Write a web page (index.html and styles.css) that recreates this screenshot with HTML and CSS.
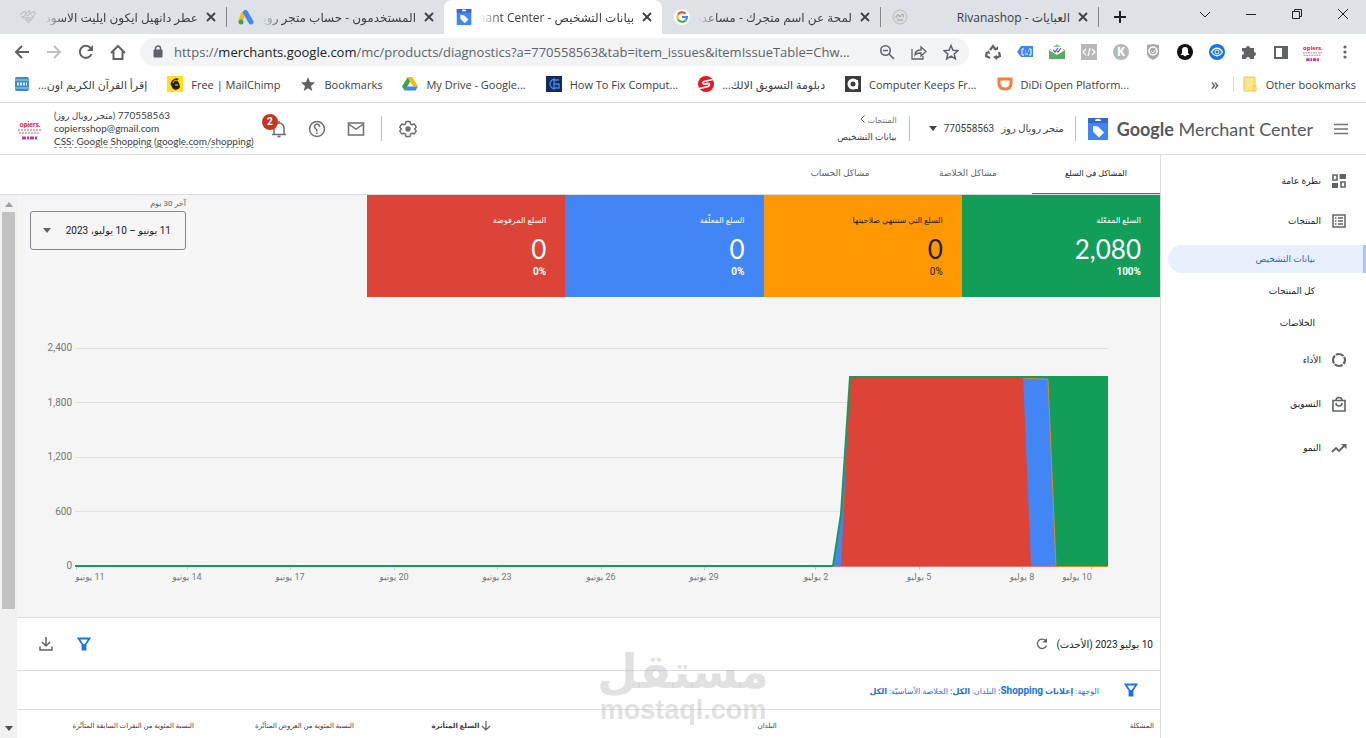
FILE: index.html
```html
<!DOCTYPE html>
<html lang="en">

<head>
    <meta charset="UTF-8">
    <meta name="viewport" content="width=device-width, initial-scale=1.0">
    <title>بيانات التشخيص - Merchant Center</title>
    <link rel="stylesheet" href="styles.css">
</head>

<body>
    <!-- shared icons -->
    <svg class="symbols" aria-hidden="true">
        <symbol id="close" viewBox="0 0 16 16"><path d="M4 4l8 8M12 4l-8 8" fill="none" stroke="#3c4043" stroke-width="1.8"/></symbol>
        <symbol id="tag" viewBox="0 0 20 22">
            <path d="M0 0h20v22H0z" fill="#4285f4"/><path d="M0 0h20v5H0z" fill="#3367d6"/>
            <path d="M7 3c0-3 6-3 6 0z" fill="#fff"/>
            <path d="M5 8l5 .5 6 6-5 5-6-6z" fill="#fff"/>
        </symbol>
        <symbol id="avatar" viewBox="0 0 26 26">
            <text x="13" y="11" text-anchor="middle" font-size="7" font-weight="700" fill="#e8112d">opiers.</text>
            <path d="M1 14h24M2 17h21" stroke="#e58a9c" stroke-width="1.5" stroke-dasharray="2 1"/>
            <path d="M5 22h16" stroke="#c736a5" stroke-width="3" stroke-dasharray="4 1 2 1"/>
        </symbol>
        <symbol id="stamp" viewBox="0 0 16 16">
            <path d="M1 6c0-4 6-4 5-1S2 8 1 7m5-2c2-4 5-4 4-1S7 8 7 6m4-1c2-3 5-3 4 0s-4 3-3 1M2 9h12M5 11h7M7 13h3" fill="none" stroke="#b3b3b3" stroke-width="1"/>
        </symbol>
        <symbol id="filter" viewBox="0 0 14 14"><path d="M1.500 1.500h11L8.500 7.500v5h-3v-5z" fill="none" stroke="#1a73e8" stroke-width="1.800"/><path d="M5.500 7h3v5.500h-3z" fill="#1a73e8"/></symbol>
    </svg>

    <header class="browser">
        <div class="tabstrip">
            <div class="tab">
                <svg width="16" height="16"><use href="#stamp"/></svg>
                <span class="title fade">عطر دانهيل ايكون ايليت الاسود</span>
                <button class="close" aria-label="Close"><svg width="16" height="16"><use href="#close"/></svg></button>
            </div>
            <div class="tab line">
                <svg width="16" height="16" viewBox="0 0 16 16"><path d="M6 3L2.500 12" stroke="#fbbc04" stroke-width="4.500"/><path d="M7.500 3.500L13 13" stroke="#4285f4" stroke-width="5" stroke-linecap="round"/><circle cx="3" cy="13" r="2.500" fill="#34a853"/></svg>
                <span class="title fade">المستخدمون - حساب متجر رويال</span>
                <button class="close" aria-label="Close"><svg width="16" height="16"><use href="#close"/></svg></button>
            </div>
            <div class="tab active">
                <svg width="16" height="16"><use href="#tag"/></svg>
                <span class="title fade">بيانات التشخيص - Merchant Center</span>
                <button class="close" aria-label="Close"><svg width="16" height="16"><use href="#close"/></svg></button>
            </div>
            <div class="tab">
                <svg width="16" height="16" viewBox="0 0 16 16"><circle cx="8" cy="8" r="8" fill="#fff"/><g fill="none" stroke-width="2"><path d="M11.500 4.500A5 5 0 0 0 4 5.500" stroke="#ea4335"/><path d="M4 5.500a5 5 0 0 0 0 5" stroke="#fbbc04"/><path d="M4 10.500a5 5 0 0 0 7.500 1" stroke="#34a853"/><path d="M11.500 11.500A5 5 0 0 0 13 8H8" stroke="#4285f4"/></g></svg>
                <span class="title fade">لمحة عن اسم متجرك - مساعدة</span>
                <button class="close" aria-label="Close"><svg width="16" height="16"><use href="#close"/></svg></button>
            </div>
            <div class="tab line">
                <svg width="16" height="16" viewBox="0 0 16 16"><circle cx="8" cy="8" r="7" fill="#ddd" stroke="#bbb"/><path d="M4 9c0-4 4-4 3-1m1 0c1-4 5-3 3 0M5 11h6" fill="none" stroke="#999"/></svg>
                <span class="title">العبايات - Rivanashop</span>
                <button class="close" aria-label="Close"><svg width="16" height="16"><use href="#close"/></svg></button>
            </div>
            <button class="newtab" aria-label="New tab"><svg width="14" height="14" viewBox="0 0 14 14"><path d="M7 1v12M1 7h12" stroke="#202124" stroke-width="2"/></svg></button>
            <div class="window">
                <button aria-label="Search tabs"><svg width="12" height="12" viewBox="0 0 12 12"><path d="M1 4l5 5 5-5"/></svg></button>
                <button aria-label="Minimize"><svg width="12" height="12" viewBox="0 0 12 12"><path d="M1 6.500h10"/></svg></button>
                <button aria-label="Restore"><svg width="12" height="12" viewBox="0 0 12 12"><path d="M1.500 3.500h7v7h-7zM3.500 3.500v-2h7v7h-2"/></svg></button>
                <button aria-label="Close window"><svg width="12" height="12" viewBox="0 0 12 12"><path d="M1 1l10 10M11 1L1 11"/></svg></button>
            </div>
        </div>

        <div class="toolbar">
            <button aria-label="Back"><svg width="16" height="16" viewBox="0 0 16 16"><path d="M15 8H2M8 2L2 8l6 6" fill="none" stroke="#5f6368" stroke-width="2"/></svg></button>
            <button aria-label="Forward"><svg width="16" height="16" viewBox="0 0 16 16"><path d="M1 8h13M8 2l6 6-6 6" fill="none" stroke="#bdc1c6" stroke-width="2"/></svg></button>
            <button aria-label="Reload"><svg width="16" height="16" viewBox="0 0 16 16"><path d="M13.500 10A6 6 0 1 1 12.500 4" fill="none" stroke="#5f6368" stroke-width="2"/><path d="M15 1v6H9z" fill="#5f6368"/></svg></button>
            <button aria-label="Home"><svg width="16" height="16" viewBox="0 0 16 16"><path d="M1 9l7-7 7 7M3.500 7.500V15h9V7.500" fill="none" stroke="#5f6368" stroke-width="2"/></svg></button>
            <div class="omnibox">
                <svg width="10" height="14" viewBox="0 0 10 14"><path d="M1 5h8v7H1z" fill="#5f6368" stroke="#5f6368"/><path d="M2.500 5V3.500a2.500 2.500 0 0 1 5 0V5" fill="none" stroke="#5f6368" stroke-width="1.500"/></svg>
                <span class="url">https://<b>merchants.google.com</b>/mc/products/diagnostics?a=770558563&amp;tab=item_issues&amp;itemIssueTable=Chw...</span>
                <button aria-label="Zoom"><svg width="16" height="16" viewBox="0 0 16 16"><g fill="none" stroke="#5f6368" stroke-width="1.600"><circle cx="6.500" cy="6.500" r="4.700"/><path d="M10 10l5 5M4 6.500h5"/></g></svg></button>
                <button aria-label="Share"><svg width="16" height="16" viewBox="0 0 16 16"><path d="M1 5v10h11v-3M4 11c0-4 3-5 6-5V3l5 4.500L10 12V9c-3 0-5 .5-6 2z" fill="none" stroke="#5f6368" stroke-width="1.300"/></svg></button>
                <button aria-label="Bookmark this page"><svg width="16" height="16" viewBox="0 0 16 16"><path d="M8 1.500l2 4.700 5 .4-3.800 3.300 1.200 5L8 12.200 3.600 15l1.200-5L1 6.600l5-.4z" fill="none" stroke="#5f6368" stroke-width="1.500"/></svg></button>
            </div>
            <div class="extensions">
                <svg viewBox="0 0 16 16"><path d="M5 6l3-4 3 4M2 8l-1 4 4 2M14 8l1 4-4 2" fill="none" stroke="#5f6368" stroke-width="2.200"/><path d="M9 6h4V2zM4 6L1 9l4 1zM12 11l-4 2 4 3z" fill="#5f6368"/></svg>
                <svg viewBox="0 0 16 16"><path d="M4 2h12v11H4l-4-5z" fill="#4285f4"/><path d="M7 5H5v6h2M12 5h2v6h-2M8 7h1M11 7h1M8 10h3" fill="none" stroke="#fff"/></svg>
                <svg viewBox="0 0 16 16"><path d="M0 6l8-6 8 6z" fill="#8bc98f"/><path d="M2 3h12v8H2z" fill="#fff"/><path d="M4 6l2 2 3-4M8 7l1 1 3-4" fill="none" stroke="#7646c8" stroke-width="1.200"/><path d="M0 6l8 5 8-5v9H0z" fill="#58ad61"/></svg>
                <svg viewBox="0 0 16 16"><path d="M0 0h16v16H0z" fill="#b8b8b8"/><path d="M5 5L2 8l3 3M11 5l3 3-3 3M9 4l-2 8" fill="none" stroke="#fff" stroke-width="1.300"/></svg>
                <svg viewBox="0 0 16 16"><circle cx="8" cy="8" r="8" fill="#b8b8b8"/><text x="8" y="12" text-anchor="middle" font-size="12" font-weight="700" fill="#fff">K</text></svg>
                <svg viewBox="0 0 16 16"><path d="M2 1l6-1 6 1v8c0 4-4 6-6 7-2-1-6-3-6-7z" fill="#a9a9a9"/><circle cx="8" cy="7" r="4" fill="none" stroke="#fff" stroke-width="1.500"/><path d="M6 7l2 2 4-5" fill="none" stroke="#fff"/></svg>
                <svg viewBox="0 0 16 16"><circle cx="8" cy="8" r="8" fill="#111"/><path d="M5 6a3 3 0 0 1 6 0v3l1.500 2H10l-2 1.500L6 11H3.500L5 9z" fill="#fff"/></svg>
                <svg viewBox="0 0 16 16"><circle cx="8" cy="8" r="8" fill="#1a73e8"/><path d="M2.500 8c3-5 8-5 11 0-3 5-8 5-11 0z" fill="none" stroke="#fff" stroke-width="1.300"/><circle cx="8" cy="8" r="2" fill="none" stroke="#fff"/></svg>
                <svg viewBox="0 0 16 16"><path d="M1 4h4a2 2 0 1 1 4 0h4v4a2 2 0 1 1 0 4v3H9a2 2 0 1 0-4 0H1v-4a2 2 0 1 0 0-4z" fill="#5f6368"/></svg>
                <svg viewBox="0 0 16 16"><path d="M2 3h12v11H2z" fill="none" stroke="#5f6368" stroke-width="2"/><path d="M9 3h5v11H9z" fill="#5f6368"/></svg>
                <svg class="face"><use href="#avatar"/></svg>
                <svg viewBox="0 0 16 16"><g fill="#5f6368"><circle cx="8" cy="3" r="1.600"/><circle cx="8" cy="8" r="1.600"/><circle cx="8" cy="13" r="1.600"/></g></svg>
            </div>
        </div>

        <nav class="bookmarks">
            <a href="#"><svg viewBox="0 0 16 16"><rect x="1" y="1" width="14" height="14" rx="2" fill="#3c8dc5"/><path d="M1 4h14M1 12h14" stroke="#a9d6ee"/><path d="M3 8h10" stroke="#d5ecf8" stroke-width="3" stroke-dasharray="2 1"/></svg><span class="ar">إقرأ القرآن الكريم اون...</span></a>
            <a href="#"><svg viewBox="0 0 16 16"><path d="M0 0h16v16H0z" fill="#ffe01b"/><path d="M4 9c-2-2 4-9 8-6l-2 1 2 3 1 4c-1 3-7 4-8 0z" fill="#241c15"/><path d="M6 7c1-3 3-3 4-2M8 9h3" fill="none" stroke="#ffe01b"/></svg><span>Free | MailChimp</span></a>
            <a href="#"><svg viewBox="0 0 16 16"><path d="M8 1l2 5 5 .4-4 3.500 1.300 5L8 12.200 3.700 15 5 9.900 1 6.400 6 6z" fill="#5f6368"/></svg><span>Bookmarks</span></a>
            <a href="#"><svg viewBox="0 0 16 16"><path d="M5.500 1.500h5L5 11l-2.500 3.500L0 10.500z" fill="#34a853"/><path d="M5.500 1.500h5l5.500 9h-5z" fill="#fbbc04"/><path d="M5 10.500h11l-2.500 4h-11z" fill="#4285f4"/></svg><span>My Drive - Google...</span></a>
            <a href="#"><svg viewBox="0 0 16 16"><path d="M0 0h16v16H0z" fill="#17285c"/><path d="M9 3a5 5 0 1 0 0 10M8 3v10M8 4h5M8 8h5v4H9" fill="none" stroke="#3d8de0" stroke-width="1.300"/></svg><span>How To Fix Comput...</span></a>
            <a href="#"><svg viewBox="0 0 16 16"><circle cx="8" cy="8" r="8" fill="#e9151b"/><path d="M16 3L6 5.500c-2 1-1 3 1 2.500l3-.5c2 0 2 2 0 3L0 13" fill="none" stroke="#fff" stroke-width="1.800"/></svg><span class="ar">دبلومة التسويق الالك...</span></a>
            <a href="#"><svg viewBox="0 0 16 16"><path d="M0 0h16v16H0z" fill="#3c3c3c"/><circle cx="8" cy="8" r="4" fill="none" stroke="#fff" stroke-width="3"/><path d="M11 4h2v9h-2z" fill="#fff"/></svg><span>Computer Keeps Fr...</span></a>
            <a href="#"><svg viewBox="0 0 16 16"><path d="M2 3h12v4c0 4-2 6-6 6s-6-2-6-6z" fill="none" stroke="#fc7b34" stroke-width="3"/></svg><span>DiDi Open Platform...</span></a>
            <span class="more">»</span>
            <a class="other" href="#"><svg viewBox="0 0 16 16"><path d="M2 1h11v14H2z" fill="#fce58c" stroke="#e8c84c"/><path d="M11 10h3v5h-3z" fill="#fce58c" stroke="#e8c84c"/></svg><span>Other bookmarks</span></a>
        </nav>
    </header>

    <div class="app" dir="rtl">
        <header class="topbar">
            <button class="menu" aria-label="القائمة"><svg width="16" height="12" viewBox="0 0 16 12"><path d="M1 1.500h14M1 6h14M1 10.500h14" stroke="#757575" stroke-width="1.300"/></svg></button>
            <a class="logo" href="#" dir="ltr"><svg width="22" height="22"><use href="#tag"/></svg><span><b>Google</b> Merchant Center</span></a>
            <button class="account"><span>متجر رويال روز</span><span>770558563</span><svg width="8" height="5" viewBox="0 0 8 5"><path d="M0 0h8L4 5z" fill="#444"/></svg></button>
            <div class="crumbs">
                <a href="#">المنتجات <svg width="5" height="8" viewBox="0 0 5 8"><path d="M4.500 .5L1 4l3.500 3.500" fill="none" stroke="#b8433c"/></svg></a>
                <strong>بيانات التشخيص</strong>
            </div>
            <div class="tools" dir="ltr">
                <div class="user">
                    <svg width="26" height="26"><use href="#avatar"/></svg>
                    <div>
                        <p><span class="shop" dir="rtl">(متجر رويال روز)</span> 770558563</p>
                        <p>copiersshop@gmail.com</p>
                        <p><a href="#">CSS: Google Shopping (google.com/shopping)</a></p>
                    </div>
                </div>
                <button class="bell" aria-label="الإشعارات"><svg width="16" height="18" viewBox="0 0 16 18"><path d="M1 14.500h14M3 14V8a5 5 0 0 1 10 0v6M8 1v2M6.500 16.500h3" fill="none" stroke="#6f6f6f" stroke-width="1.500"/></svg><span class="badge">2</span></button>
                <button aria-label="مساعدة"><svg width="18" height="18" viewBox="0 0 18 18"><g fill="none" stroke="#6f6f6f" stroke-width="1.500"><circle cx="9" cy="9" r="7.500"/><path d="M11.500 7a2.500 2.500 0 1 0-4 1.500C9 9.500 9 10 9 11.500M9 12.500V14"/></g></svg></button>
                <button aria-label="البريد"><svg width="18" height="18" viewBox="0 0 18 18"><path d="M1.500 3h15v12h-15zM1.500 4L9 9l7.500-5" fill="none" stroke="#6f6f6f" stroke-width="1.500"/></svg></button>
                <button class="gear" aria-label="الإعدادات"><svg width="18" height="18" viewBox="0 0 18 18"><path d="M7 1.500h4l.6 2.500 1.400.8 2.400-.8 1.800 3.200L15.500 9l1.700 1.800-1.800 3.200-2.400-.8-1.400.8-.6 2.500H7L6.400 14 5 13.200l-2.400.8-1.800-3.200L2.500 9 .8 7.200 2.600 4 5 4.800 6.400 4z" fill="none" stroke="#6f6f6f" stroke-width="1.500" stroke-linejoin="round"/><circle cx="9" cy="9" r="2.700" fill="#6f6f6f"/></svg></button>
            </div>
        </header>

        <div class="body">
            <nav class="side">
                <a class="item" href="#"><svg viewBox="0 0 16 16"><path d="M2 2h4v5H2zM10 9h4v5h-4z" fill="none" stroke="#5f6368" stroke-width="1.600"/><path d="M8.500 1H15v5H8.500zM1 10h6v5H1z" fill="#5f6368"/></svg>نظرة عامة</a>
                <a class="item" href="#"><svg viewBox="0 0 16 16"><path d="M2 2h12v12H2zM4 5h1.500M4 8h1.500M4 11h1.500M7 5h5M7 8h5M7 11h5" fill="none" stroke="#5f6368" stroke-width="1.500"/></svg>المنتجات</a>
                <div class="sub">
                    <a class="current" href="#">بيانات التشخيص</a>
                    <a href="#">كل المنتجات</a>
                    <a href="#">الخلاصات</a>
                </div>
                <a class="item" href="#"><svg viewBox="0 0 16 16"><circle cx="8" cy="8" r="6" fill="none" stroke="#5f6368" stroke-width="2.200" stroke-dasharray="8.400 1" stroke-dashoffset="4"/></svg>الأداء</a>
                <a class="item spaced" href="#"><svg viewBox="0 0 16 16"><path d="M2 4.500h12V15H2zM5 4.500a3 3 0 0 1 6 0M5 7a3 3 0 0 0 6 0" fill="none" stroke="#5f6368" stroke-width="1.600"/></svg>التسويق</a>
                <a class="item spaced" href="#"><svg viewBox="0 0 16 16"><path d="M1 12l4-4 3 3 6-6" fill="none" stroke="#5f6368" stroke-width="1.800"/><path d="M10 4h5.500v5z" fill="#5f6368"/></svg>النمو</a>
            </nav>

            <main>
                <nav class="sections">
                    <a class="on" href="#">المشاكل في السلع</a>
                    <a href="#">مشاكل الخلاصة</a>
                    <a href="#">مشاكل الحساب</a>
                </nav>
                <div class="scroller">
                    <div class="content">
                        <section class="overview">
                            <div class="summary">
                                <div class="cards">
                                    <div class="card green"><h3>السلع المفعّلة</h3><p class="count">2,080</p><p class="pct">100%</p></div>
                                    <div class="card orange"><h3>السلع التي ستنتهي صلاحيتها</h3><p class="count">0</p><p class="pct">0%</p></div>
                                    <div class="card blue"><h3>السلع المعلّقة</h3><p class="count">0</p><p class="pct">0%</p></div>
                                    <div class="card red"><h3>السلع المرفوضة</h3><p class="count">0</p><p class="pct">0%</p></div>
                                </div>
                                <div class="range">
                                    <label for="range">آخر 30 يوم</label>
                                    <div class="picker">
                                        <select id="range"><option>11 يونيو – 10 يوليو، 2023</option></select>
                                        <svg width="8" height="5" viewBox="0 0 8 5"><path d="M0 0h8L4 5z" fill="#5f6368"/></svg>
                                    </div>
                                </div>
                            </div>
                            <svg class="chart" viewBox="0 0 1143 256">
                                <path d="M58 18.500h1033M58 72.500h1033M58 127.500h1033M58 181.500h1033" stroke="#e0e0e0"/>
                                <path d="M59.500 236v4M170.500 236v4M273.500 236v4M377.500 236v4M480.500 236v4M584.500 236v4M687.500 236v4M798.500 236v4M902.500 236v4M1005.500 236v4M1074.500 236v4" stroke="#ccc"/>
                                <path d="M816 236l8-52 9-137h258v189z" fill="#129d58"/>
                                <path d="M816 236l8-50 9-139h173l25 1.500 8 187.500z" fill="#4285f4"/>
                                <path d="M824 236l9-189h173l8 189z" fill="#db4437"/>
                                <path d="M1006 48l25 1.500 8 187h52" fill="none" stroke="#d98b1c"/>
                                <path d="M58 236h758l8-52 9-137h258" fill="none" stroke="#129d58" stroke-width="2"/>
                                <path d="M816 236.500h223" stroke="#e57373"/>
                                <g class="yaxis">
                                    <text x="55" y="21">2,400</text><text x="55" y="76">1,800</text><text x="55" y="130">1,200</text><text x="55" y="185">600</text><text x="55" y="239">0</text>
                                </g>
                                <g class="xaxis">
                                    <text x="73" y="250">11 يونيو</text><text x="170" y="250">14 يونيو</text><text x="273" y="250">17 يونيو</text><text x="377" y="250">20 يونيو</text><text x="480" y="250">23 يونيو</text><text x="584" y="250">26 يونيو</text><text x="687" y="250">29 يونيو</text><text x="799" y="250">2 يوليو</text><text x="902" y="250">5 يوليو</text><text x="1005" y="250">8 يوليو</text><text x="1060" y="250">10 يوليو</text>
                                </g>
                            </svg>
                        </section>

                        <div class="actions">
                            <span class="date">10 يوليو 2023 (الأحدث)</span>
                            <button aria-label="تحديث"><svg width="12" height="12" viewBox="0 0 12 12"><path d="M10.500 7.500A4.700 4.700 0 1 1 9.500 2.500" fill="none" stroke="#5f6368" stroke-width="1.300"/><path d="M11 0v4.500H6.500z" fill="#5f6368"/></svg></button>
                            <button class="push" aria-label="تصفية"><svg width="14" height="14"><use href="#filter"/></svg></button>
                            <button class="download" aria-label="تنزيل"><svg width="14" height="14" viewBox="0 0 14 14"><path d="M7 0v9M3 5l4 4 4-4M1 9.500V13h12V9.500" fill="none" stroke="#5f6368" stroke-width="1.500"/></svg></button>
                        </div>
                        <div class="filters">
                            <svg width="14" height="14"><use href="#filter"/></svg>
                            <a href="#">الوجهة: <b>إعلانات <span class="latin">Shopping</span></b>؛ البلدان: <b>الكل</b>؛ الخلاصة الأساسيّة: <b>الكل</b></a>
                        </div>
                        <table>
                            <thead>
                                <tr>
                                    <th class="issue">المشكلة</th>
                                    <th class="countries">البلدان</th>
                                    <th class="affected"><svg width="10" height="10" viewBox="0 0 10 10"><path d="M5 0v9M1 5l4 4 4-4" fill="none" stroke="#5f6368" stroke-width="1.200"/></svg> السلع المتأثرة</th>
                                    <th class="shown">النسبة المئوية من العروض المتأثّرة</th>
                                    <th>النسبة المئوية من النقرات السابقة المتأثّرة</th>
                                </tr>
                            </thead>
                        </table>
                    </div>
                    <div class="scrollbar">
                        <svg width="8" height="5" viewBox="0 0 8 5"><path d="M0 5l4-5 4 5z" fill="#a0a0a0"/></svg>
                        <div class="thumb"></div>
                        <svg width="8" height="5" viewBox="0 0 8 5"><path d="M0 0l4 5 4-5z" fill="#505050"/></svg>
                    </div>
                </div>
            </main>
        </div>
    </div>

    <div class="watermark" aria-hidden="true"><span class="mark">مستقل</span><span class="site">mostaql.com</span></div>
</body>

</html>
```
FILE: styles.css
```css
* {
    box-sizing: border-box;
}

body {
    margin: 0;
    height: 100vh;
    display: flex;
    flex-direction: column;
    overflow: hidden;
    background-color: #fff;
    color: #3c4043;
    font-family: Roboto, "DejaVu Sans", sans-serif;
    font-size: 9px;
}

p, h3 {
    margin: 0;
}

a {
    color: inherit;
    text-decoration: none;
}

button {
    display: flex;
    align-items: center;
    padding: 0;
    border: none;
    background: none;
    color: inherit;
    font: inherit;
    cursor: pointer;
}

svg {
    flex: none;
}

.symbols {
    position: absolute;
    width: 0;
    height: 0;
}

/* browser frame */
.browser {
    font-family: "Open Sans", "DejaVu Sans", sans-serif;
    font-size: 11px;
    border-bottom: 1px solid #dadce0;
}

.tabstrip {
    display: flex;
    height: 34px;
    padding-left: 8px;
    background-color: #dee1e6;
}

.tab {
    display: flex;
    flex: 0 1 218px;
    min-width: 0;
    align-items: center;
    padding: 0 7px 0 12px;
    border-radius: 8px 8px 0 0;
}

.tab.line {
    border-radius: 0;
    background: linear-gradient(#80868b, #80868b) left / 1px 20px no-repeat;
}

.tab.active {
    background-color: #fff;
}

.title {
    flex: 1;
    margin: 0 5px 0 8px;
    overflow: hidden;
    white-space: nowrap;
    direction: rtl;
    font-size: 12px;
}

.title.fade {
    mask-image: linear-gradient(to right, transparent, #000 20px);
}

.newtab {
    width: 44px;
    justify-content: center;
    background: linear-gradient(#80868b, #80868b) left / 1px 20px no-repeat;
}

.window {
    display: flex;
    margin-left: auto;
    height: 28px;
}

.window button {
    width: 46px;
    justify-content: center;
}

.window path {
    fill: none;
    stroke: #202124;
}

.toolbar {
    display: flex;
    align-items: center;
    height: 36px;
    padding: 0 13px 0 14px;
    gap: 16px;
}

.omnibox {
    display: flex;
    flex: 1;
    align-items: center;
    gap: 16px;
    min-width: 0;
    height: 28px;
    margin-left: -2px;
    padding: 0 10px 0 13px;
    border-radius: 14px;
    background-color: #f1f3f4;
}

.url {
    flex: 1;
    min-width: 0;
    margin-left: -5px;
    overflow: hidden;
    white-space: nowrap;
    font-size: 13px;
    color: #5f6368;
}

.url b {
    font-weight: 400;
    color: #202124;
}

.extensions {
    display: flex;
    align-items: center;
    gap: 16px;
}

.extensions svg, .bookmarks svg {
    width: 16px;
    height: 16px;
}

.extensions .face {
    width: 22px;
    height: 22px;
    margin: 0 -3px;
}

.bookmarks {
    display: flex;
    align-items: center;
    gap: 20px;
    height: 32px;
    padding: 0 10px 4px 14px;
    white-space: nowrap;
}

.bookmarks a {
    display: flex;
    align-items: center;
    gap: 8px;
}

.bookmarks .ar {
    direction: rtl;
}

.more {
    margin-left: auto;
    font-size: 16px;
}

.bookmarks .other {
    margin-left: -6px;
    padding-left: 8px;
    border-left: 1px solid #dadce0;
}

/* top bar */
.app {
    display: flex;
    flex: 1;
    flex-direction: column;
    min-height: 0;
}

.topbar {
    display: flex;
    align-items: center;
    height: 52px;
    padding: 0 17px;
    border-bottom: 1px solid #dadce0;
}

.logo {
    display: flex;
    align-items: center;
    gap: 8px;
    margin: 0 20px 0 11px;
    color: #55595e;
    font-family: Lato, sans-serif;
    font-size: 18px;
    white-space: nowrap;
}

.account, .crumbs {
    height: 25px;
    border-right: 1px solid #bdbdbd;
}

.account {
    gap: 7px;
    padding-right: 11px;
    font-size: 10px;
}

.crumbs {
    display: flex;
    flex-direction: column;
    justify-content: center;
    gap: 4px;
    margin-right: 19px;
    padding-right: 12px;
    line-height: 12px;
}

.crumbs a {
    color: #757575;
    font-size: 8px;
}

.crumbs strong {
    font-weight: 400;
}

.tools {
    display: flex;
    align-items: center;
    gap: 21px;
    margin-right: auto;
}

.user {
    display: flex;
    align-items: center;
    gap: 11px;
    font-family: Lato, "DejaVu Sans", sans-serif;
    font-size: 10px;
    line-height: 13px;
}

.user a {
    border-bottom: 1px dashed #9e9e9e;
}

.shop {
    display: inline-block;
    font-size: 9px;
}

.bell {
    position: relative;
    margin-left: -4px;
}

.badge {
    position: absolute;
    left: -9px;
    top: -6px;
    width: 16px;
    border-radius: 8px;
    background-color: #c5371c;
    color: #fff;
    font-size: 10px;
    font-weight: 700;
    line-height: 16px;
}

.gear {
    height: 25px;
    margin-left: -5px;
    padding-left: 17px;
    border-left: 1px solid #bdbdbd;
}

/* side navigation */
.body {
    display: flex;
    flex: 1;
    min-height: 0;
}

.side {
    width: 206px;
    flex: none;
    padding-top: 6px;
    border-left: 1px solid #dadce0;
    color: #202124;
}

.item {
    display: flex;
    align-items: center;
    gap: 10px;
    height: 40px;
    padding-right: 19px;
}

.item svg {
    width: 16px;
    height: 16px;
}

.item.spaced {
    margin-top: 4px;
}

.sub {
    display: flex;
    flex-direction: column;
    gap: 4px;
    padding: 4px 0 3px;
}

.sub a {
    padding-right: 51px;
    line-height: 28px;
}

.sub .current {
    margin-left: 7px;
    padding-right: 48px;
    border-right: 3px solid #a8c7fa;
    border-radius: 14px 0 0 14px;
    background-color: #e8f0fe;
    color: #1967d2;
}

/* main column */
main {
    display: flex;
    flex: 1;
    flex-direction: column;
    min-width: 0;
}

.sections {
    display: flex;
    height: 40px;
    border-bottom: 1px solid #dadce0;
    color: #5f6368;
}

.sections a {
    width: 128px;
    line-height: 37px;
    text-align: center;
}

.sections .on {
    border-bottom: 1px solid #1a73e8;
    color: #202124;
    font-size: 8px;
}

.scroller {
    display: flex;
    flex: 1;
    min-height: 0;
}

.content {
    flex: 1;
    min-width: 0;
    overflow: hidden;
}

.scrollbar {
    display: flex;
    flex-direction: column;
    align-items: center;
    width: 17px;
    padding: 7px 0;
    background-color: #f1f1f1;
}

.thumb {
    width: 13px;
    height: 397px;
    margin: 5px 0 auto;
    background-color: #c1c1c1;
}

.overview {
    background-color: #f5f5f5;
    padding-bottom: 31px;
    border-bottom: 1px solid #dadce0;
}

.summary {
    display: flex;
}

.cards {
    display: grid;
    flex: 1;
    grid-template-columns: repeat(4, 1fr);
}

.card {
    height: 102px;
    padding: 18px 19px;
    color: #fff;
}

.card h3 {
    font-size: 8px;
    font-weight: 500;
    line-height: 16px;
}

.count {
    font-family: Lato, sans-serif;
    font-size: 26px;
    line-height: 40px;
}

.pct {
    direction: ltr;
    text-align: right;
    font-size: 10px;
    font-weight: 700;
    line-height: 6px;
}

.green {
    background-color: #129d58;
}

.orange {
    background-color: #ff9800;
    color: #202124;
}

.orange .pct {
    font-weight: 400;
}

.blue {
    background-color: #4285f4;
}

.red {
    background-color: #db4437;
}

.range {
    width: 350px;
    padding: 1px 181px 0 13px;
}

.range label {
    display: block;
    line-height: 15px;
    font-size: 8px;
    color: #5f6368;
}

.picker {
    position: relative;
}

.picker select {
    width: 100%;
    height: 39px;
    padding: 0 14px;
    appearance: none;
    border: 1px solid #80868b;
    border-radius: 3px;
    background: none;
    color: #202124;
    font: inherit;
    font-size: 10px;
}

.picker svg {
    position: absolute;
    left: 13px;
    top: 17px;
}

.chart {
    display: block;
    width: 100%;
    margin-top: 33px;
}

.chart text {
    fill: #757575;
}

.yaxis text {
    text-anchor: end;
    direction: ltr;
    font-size: 10px;
}

.xaxis text {
    text-anchor: middle;
    direction: rtl;
    font-size: 9px;
}

/* issue list */
.actions, .filters {
    display: flex;
    align-items: center;
    border-bottom: 1px solid #dadce0;
}

.actions {
    gap: 8px;
    height: 53px;
    padding: 0 7px 0 22px;
}

.date {
    font-size: 10px;
    color: #202124;
}

.push {
    margin-right: auto;
}

.download {
    margin-right: 16px;
}

.filters {
    gap: 25px;
    height: 39px;
    padding-right: 22px;
    color: #1a73e8;
    font-size: 8px;
}

.latin {
    font-size: 10px;
}

table {
    width: 100%;
    table-layout: fixed;
    border-collapse: collapse;
}

th {
    padding: 0 6px 0 0;
    text-align: right;
    font-size: 7px;
    font-weight: 400;
    line-height: 32px;
    white-space: nowrap;
}

th svg {
    vertical-align: middle;
}

.issue {
    width: 33%;
}

.countries {
    width: 25%;
}

.affected {
    width: 12%;
    font-weight: 700;
}

.shown {
    width: 14%;
}

.watermark {
    position: absolute;
    left: 50%;
    bottom: 14px;
    transform: translateX(-50%);
    display: flex;
    flex-direction: column;
    align-items: center;
    color: rgba(170, 170, 170, 0.35);
    font-family: "Liberation Sans", "DejaVu Sans", sans-serif;
    font-weight: 700;
}

.mark {
    font-size: 47px;
    line-height: 48px;
}

.site {
    font-size: 27px;
    line-height: 28px;
}
```
